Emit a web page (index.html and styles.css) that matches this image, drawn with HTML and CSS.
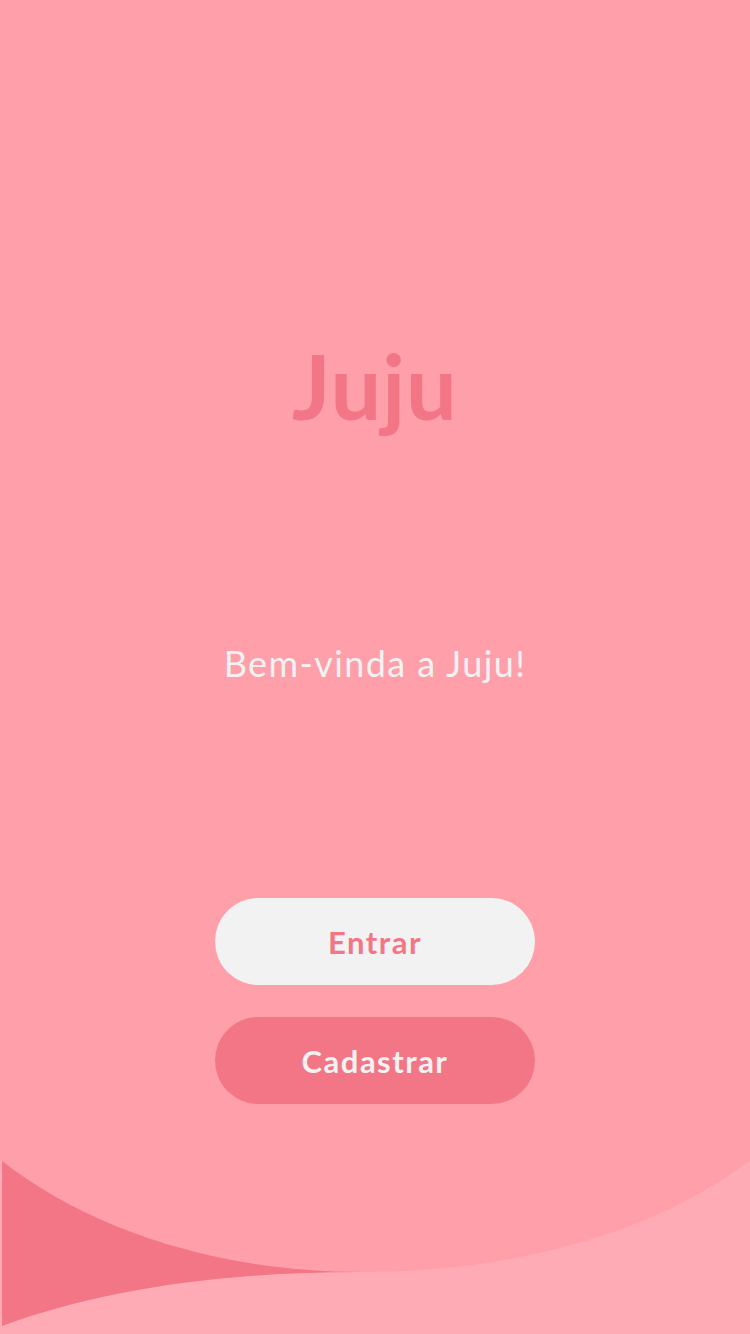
FILE: index.html
```html
<!DOCTYPE html>
<html lang="pt-BR">
<head>
<meta charset="utf-8">
<title>Juju</title>
<link rel="stylesheet" href="styles.css">
</head>
<body>
<main class="screen">
  <h1 class="brand">Juju</h1>
  <p class="welcome">Bem-vinda a Juju!</p>
  <div class="actions">
    <button class="btn btn-light" type="button">Entrar</button>
    <button class="btn btn-dark" type="button">Cadastrar</button>
  </div>
  <svg class="wave" viewBox="0 0 750 184" preserveAspectRatio="none" aria-hidden="true">
    <path class="wave-light" d="M0,184 L0,11 L2,11 L2,176 C100,140 220,122 360,122 C520,122 660,80 750,10 L750,184 Z"/>
    <path class="wave-dark" d="M2,11 C90,80 220,122 360,122 C220,122 100,140 2,176 Z"/>
  </svg>
</main>
</body>
</html>
```
FILE: styles.css
```css
* { box-sizing: border-box; }
html, body { margin: 0; padding: 0; }
body { background: #FF9FAA; font-family: Lato, "Noto Sans", sans-serif; }

.screen {
  width: 750px;
  height: 1334px;
  background: #FF9FAA;
  display: flex;
  flex-direction: column;
  align-items: center;
  overflow: hidden;
}

.brand {
  margin: 341px 0 0;
  font-size: 90px;
  line-height: 88px;
  font-weight: 700;
  color: #F27685;
  letter-spacing: 1px;
}

.welcome {
  margin: 214px 0 0;
  font-size: 36px;
  line-height: 40px;
  color: #F2F2F2;
  font-weight: 400;
  letter-spacing: 1.4px;
}

.actions {
  margin-top: 215px;
  display: flex;
  flex-direction: column;
  gap: 32px;
}

.btn {
  width: 320px;
  height: 87px;
  border: 0;
  border-radius: 44px;
  font-family: Lato, "Noto Sans", sans-serif;
  font-size: 31px;
  font-weight: 700;
  letter-spacing: 1.5px;
  cursor: pointer;
}
.btn-light { background: #F2F2F2; color: #F27685; }
.btn-dark { background: #F27685; color: #F2F2F2; }

.wave {
  display: block;
  margin-top: auto;
  width: 750px;
  height: 184px;
}
.wave-light { fill: #FFABB5; }
.wave-dark { fill: #F27685; }
```
